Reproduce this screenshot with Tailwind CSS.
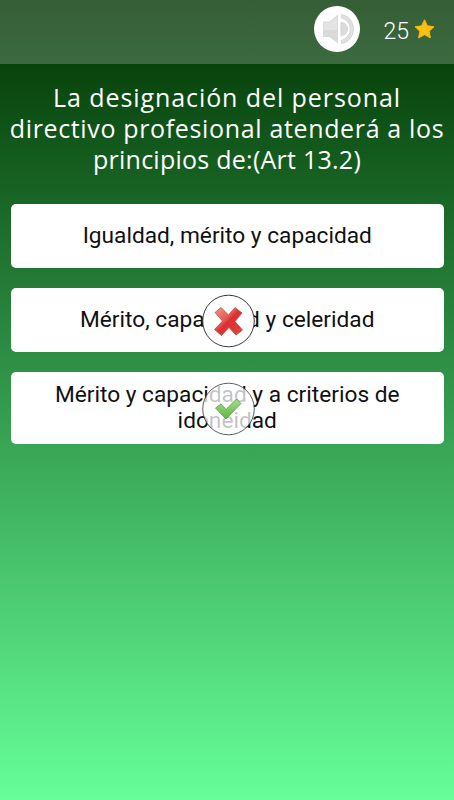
<!DOCTYPE html>
<html lang="es">
<head>
    <meta charset="UTF-8">
    <meta name="viewport" content="width=device-width, initial-scale=1.0">
    <title>Test</title>
    <script src="https://cdn.jsdelivr.net/npm/@tailwindcss/browser@4"></script>
</head>
<body class="h-screen overflow-hidden bg-linear-to-b/srgb from-[#003300] to-[#66ff99] font-['Roboto',sans-serif]">
    <!-- Top bar -->
    <header class="h-16 bg-white/21 flex items-center justify-end pr-[19px] pb-[7px]">
        <button class="w-[46px] h-[46px] rounded-full bg-white mr-[23px]" aria-label="Sonido">
            <svg class="w-[46px] h-[46px]" viewBox="0 0 46 46">
                <path d="M9 15.500h6.500L24 8.500v29L15.500 31H9z" fill="#dadada" />
                <path d="M10 16.500h6l7-5.500v13H10z" fill="#e4e4e4" />
                <path d="M27 16.500a6.500 6.500 0 0 1 0 13z" fill="#dcdcdc" stroke="#d2d2d2" stroke-width="1" />
                <path d="M27 10a13.200 13.200 0 0 1 0 26" fill="none" stroke="#d2d2d2" stroke-width="4" />
                <path d="M27 10a13.200 13.200 0 0 1 0 26" fill="none" stroke="#e0e0e0" stroke-width="2.500" />
            </svg>
        </button>
        <span class="text-white text-[23px] leading-none font-[350] mt-[5px] mr-[5px]">25</span>
        <svg class="w-[21px] h-5" viewBox="0 0 21 20">
            <path d="M10.500.8l2.900 6 6.600.900-4.800 4.600 1.200 6.600-5.900-3.200-5.900 3.200 1.200-6.600L1 7.700l6.600-.900z" fill="#fcc010" stroke="#f4b414" stroke-width="1" stroke-linejoin="round" />
        </svg>
    </header>

    <!-- Question -->
    <h1 class="mt-[18px] h-[93px] text-center text-white text-[25px] leading-[31px] font-['Open_Sans',sans-serif] font-normal whitespace-nowrap">
        <span class="block tracking-[0.92px]">La designación del personal</span>
        <span class="block tracking-[0.65px]">directivo profesional atenderá a los</span>
        <span class="block tracking-[0.25px]">principios de:(Art 13.2)</span>
    </h1>

    <!-- Answers -->
    <main class="mt-[29px] pl-[11px] pr-[10.5px] flex flex-col gap-5 text-[22.7px] leading-[26px] text-center text-[#111]">
        <div class="h-16 bg-white rounded-[5px] flex items-center justify-center">
            <span>Igualdad, mérito y capacidad</span>
        </div>
        <div class="relative h-16 bg-white rounded-[5px] flex items-center justify-center">
            <span>Mérito, capacidad y celeridad</span>
            <svg class="absolute left-[191px] top-[6px] w-[53px] h-[54px]" viewBox="0 0 53 54">
                <defs>
                    <linearGradient id="cross" x1="0" y1="0" x2="1" y2="1">
                        <stop offset="0" stop-color="#f29a8a" />
                        <stop offset=".4" stop-color="#e25a50" />
                        <stop offset=".5" stop-color="#dc3030" />
                        <stop offset="1" stop-color="#e54540" />
                    </linearGradient>
                </defs>
                <circle cx="26.500" cy="27" r="25.800" fill="white" stroke="#222" stroke-width=".9" />
                <path d="M19 13.500l7.500 7.500 6.500-7.500 7 5.500-7 8.500 7.500 8.500-6.500 5-7-7.500-7.500 8-7-6 8-8.500-7.500-8.500z" fill="url(#cross)" stroke="#b94a46" stroke-width=".8" stroke-linejoin="round" />
            </svg>
        </div>
        <div class="relative h-[72px] bg-white rounded-[5px] flex items-center justify-center">
            <span>Mérito y capacidad y a criterios de<br>idoneidad</span>
            <svg class="absolute left-[191px] top-[10px] w-[53px] h-[54px]" viewBox="0 0 53 54">
                <defs>
                    <linearGradient id="check" x1="0" y1="0" x2="0" y2="1">
                        <stop offset="0" stop-color="#a4dc90" />
                        <stop offset="1" stop-color="#5db83c" />
                    </linearGradient>
                </defs>
                <circle cx="26.500" cy="27" r="25.800" fill="white" fill-opacity=".75" stroke="#333" stroke-width=".8" />
                <path d="M13.500 26l5.500-4 5 5.500 10.500-10.500 4.500 4.500-15 15.500z" fill="url(#check)" stroke="#5a9a4a" stroke-width=".8" stroke-linejoin="round" />
            </svg>
        </div>
    </main>
</body>
</html>
